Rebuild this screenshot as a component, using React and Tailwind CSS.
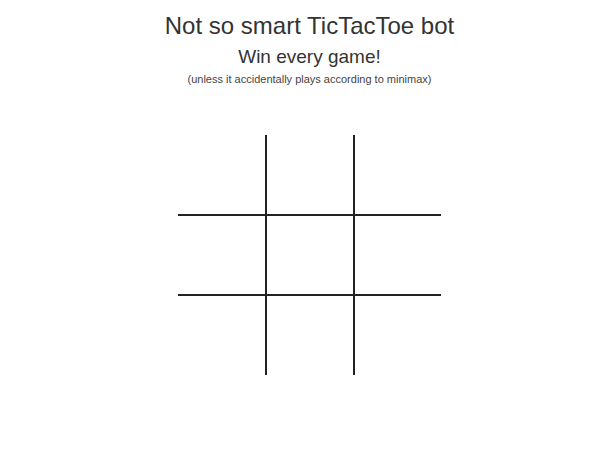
export default function App() {
  const cells = [
    "border-r-2 border-b-2",
    "border-r-2 border-b-2",
    "border-b-2",
    "border-r-2 border-b-2",
    "border-r-2 border-b-2",
    "border-b-2",
    "border-r-2",
    "border-r-2",
    "",
  ];

  return (
    <div className="min-h-screen bg-white flex flex-col items-center pt-[12px] pl-[19px] text-[#333] font-['Liberation_Sans',Arial,sans-serif]">
      <h1 className="text-[24px] leading-[27px]">Not so smart TicTacToe bot</h1>
      <h2 className="mt-[7px] text-[19px] leading-[21px]">Win every game!</h2>
      <p className="mt-[6px] text-[11px] leading-[13px] text-[#444]">
        (unless it accidentally plays according to minimax)
      </p>
      <div className="mt-[49px] grid grid-cols-[89px_88px_86px] grid-rows-[81px_80px_79px]">
        {cells.map((c, i) => (
          <div key={i} className={`${c} border-[#222]`} />
        ))}
      </div>
    </div>
  );
}
